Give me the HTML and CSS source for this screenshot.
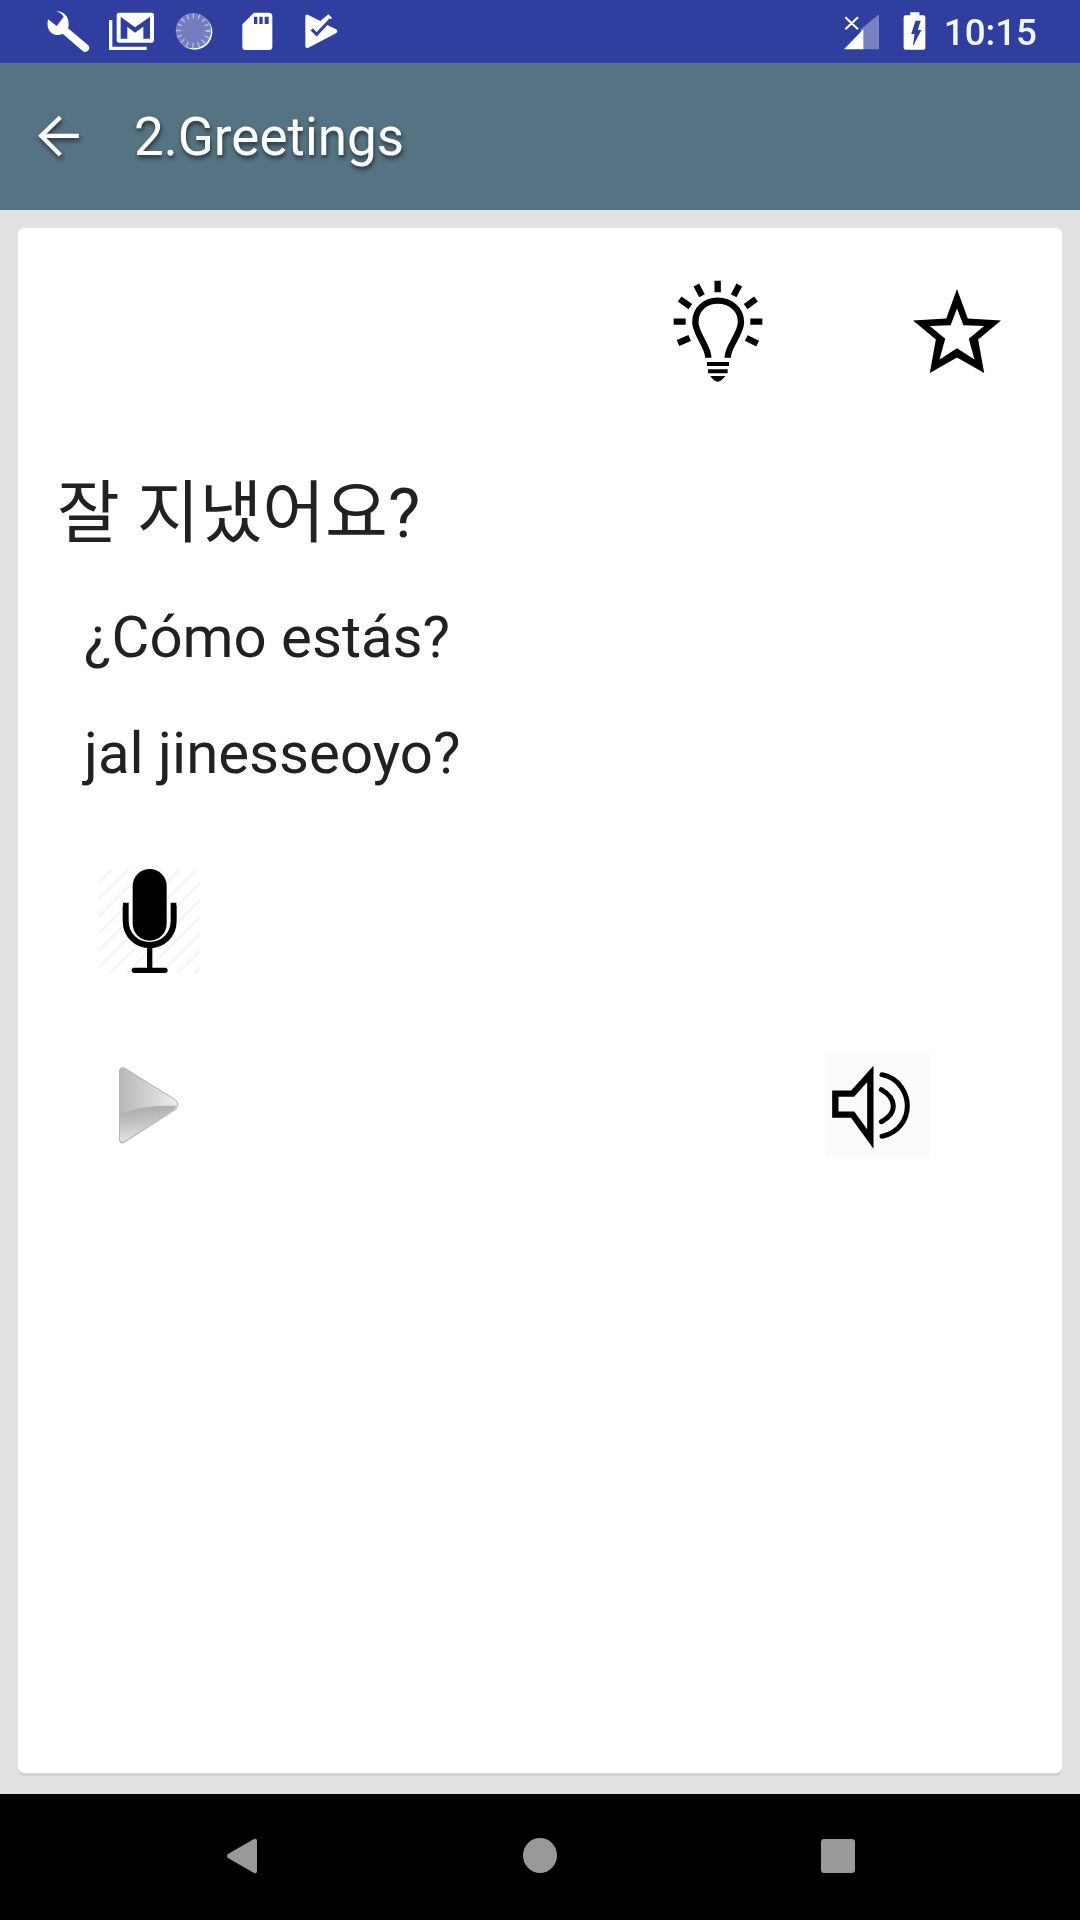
FILE: index.html
```html
<!DOCTYPE html>
<html lang="es">
<head>
<meta charset="utf-8">
<title>2.Greetings</title>
<link rel="stylesheet" href="styles.css">
</head>
<body>
<div class="screen">
  <header class="status">
    <div class="status-left">
      <svg class="slot" viewBox="111 0 189 189"><path class="w" d="M168 33C190 33 206 48 206 72C206 78 205 82 204 85L263 134Q272 142 265 151Q257 160 247 152L188 101C182 104 176 105 170 105C150 103 138 85 144 58L170 78L191 50C185 40 176 36 168 33Z"/></svg>
      <svg class="slot" viewBox="300 0 189 189"><path class="w" d="M327 60H337V140H440V150H327Z"/><rect class="w" x="350" y="38" width="112" height="90" rx="7"/><path class="b" d="M362 50L405 82L450 50V116H430V80L405 98L382 80V116H362Z"/></svg>
      <svg class="slot" viewBox="489 0 189 189"><circle class="w" cx="584" cy="96" r="53"/><circle class="b" cx="580" cy="92" r="53"/><circle class="w" cx="580" cy="92" r="53" opacity=".33"/><circle class="tick" cx="580" cy="92" r="44"/></svg>
      <svg class="slot" viewBox="678 0 189 189"><path class="w" d="M762 38H806Q817 38 817 49V140Q817 150 806 150H738Q727 150 727 140V73Z"/><path class="b" d="M762 50h10v22h-10zM778 50h10v22h-10zM794 50h12v22h-12z"/></svg>
      <svg class="slot" viewBox="867 0 189 189"><path class="w" d="M916 50Q916 41 925 45L961 63L985 43L996 53L980 74L1008 88Q1016 94 1008 100L925 143Q916 147 916 138Z"/><path class="bl" d="M935 88L950 103L992 58"/></svg>
    </div>
    <div class="status-right">
      <svg class="signal" viewBox="0 0 120 189"><path class="w" opacity=".35" d="M62 148V88L114 45Q117 44 117 48V148Z"/><path class="w" d="M12 148L70 88V148Z"/><path class="xmark" d="M16 52L54 88M54 52L16 88"/></svg>
      <svg class="battery" viewBox="0 0 76 189"><path class="w" d="M28 36H56V45H68Q74 45 74 51V144Q74 150 68 150H14Q8 150 8 144V51Q8 45 14 45H28Z"/><path class="b" d="M44 62H60L51 90H62L36 140L41 102H31Z"/></svg>
      <span class="time">10:15</span>
    </div>
  </header>

  <div class="toolbar">
    <svg class="back" viewBox="110 345 132 130"><path d="M236 408H126M180 352L122 408L180 466"/></svg>
    <h1 class="title">2.Greetings</h1>
  </div>

  <main class="content">
    <section class="card">
      <div class="actions">
        <svg class="bulb" viewBox="95 60 276 312">
          <path class="ink" d="M232 65V100M168 78L185 110M297 78L280 110M118 120L150 143M347 120L316 143M100 188H136M330 188H366M113 252L148 237M352 254L318 237"/>
          <path class="ink" d="M204 296C204 262 165 225 165 190C165 150 195 125 232 125C270 125 302 150 302 190C302 225 262 262 262 296"/>
          <path class="ink thin" d="M200 315H266M203 337H262"/>
          <path d="M210 351H255Q242 368 232 368Q221 368 210 351Z"/>
        </svg>
        <svg class="star" viewBox="820 88 262 250"><path fill-rule="evenodd" d="M951 88L983 176L1082 182L1014 238L1032 338L951 292L870 338L888 238L820 182L919 176ZM951 146L932 196L870 198L916 236L899 298L951 264L1003 298L986 236L1032 198L970 196Z"/></svg>
      </div>

      <p class="korean">잘 지냈어요?</p>
      <p class="line first">¿Cómo estás?</p>
      <p class="line">jal jinesseoyo?</p>

      <svg class="mic" viewBox="55 60 312 315">
        <defs><pattern id="hatch" width="36" height="36" patternUnits="userSpaceOnUse" patternTransform="rotate(-45)"><rect width="36" height="36" fill="#fff"/><rect y="0" width="36" height="7" fill="#f4f4f4"/></pattern></defs>
        <rect x="58" y="62" width="304" height="310" fill="url(#hatch)"/>
        <rect x="159" y="60" width="102" height="215" rx="51"/>
        <path class="holder" d="M130 170H138V215C138 260 172 288 210 288C248 288 282 260 282 215V170H290"/>
        <path class="stem" d="M210 295V362M164 364H256"/>
      </svg>

      <div class="playback">
        <svg class="play" viewBox="110 648 192 242">
          <defs>
            <linearGradient id="gloss" x1="0" y1="0" x2="1" y2="0"><stop offset="0" stop-color="#b6b8b8"/><stop offset=".6" stop-color="#d6d7d7"/><stop offset="1" stop-color="#eeeeee"/></linearGradient>
            <linearGradient id="low" x1="0" y1="0" x2=".2" y2="1"><stop offset="0" stop-color="#a6a7a7"/><stop offset=".55" stop-color="#c4c5c5"/><stop offset="1" stop-color="#e6e6e6"/></linearGradient>
          </defs>
          <path class="tri" fill="url(#gloss)" d="M118 668Q118 652 132 657L285 752Q299 766 285 780L132 878Q118 886 118 868Z"/>
          <path fill="url(#low)" d="M119 798C160 775 220 768 288 770L282 780L132 876Q120 882 119 868Z"/>
        </svg>
        <svg class="speaker" viewBox="48 40 312 312">
          <path class="cone" d="M76 162H128L181 103V298L128 225H76Z"/>
          <path class="wave" d="M214 150Q250 170 250 200Q250 228 214 246M216 105C270 115 292 165 292 198C292 240 265 280 216 290"/>
        </svg>
      </div>
    </section>
  </main>

  <nav class="nav">
    <div class="nav-slot"><svg class="nav-icon" viewBox="0 0 30 36"><path d="M27 1Q30 0 30 3V33Q30 36 27 35L1 20Q-1 18 1 16Z"/></svg></div>
    <div class="nav-slot"><span class="nav-dot"></span></div>
    <div class="nav-slot"><span class="nav-square"></span></div>
  </nav>
</div>
</body>
</html>
```
FILE: styles.css
```css
* { box-sizing: border-box; }
html, body { margin: 0; padding: 0; }
body { font-family: Roboto, "Noto Sans CJK KR", sans-serif; background: #e2e2e2; }
.screen { width: 1080px; height: 1920px; display: flex; flex-direction: column; overflow: hidden; }

.status { height: 63px; flex: none; background: #303f9f; display: flex; align-items: center; justify-content: space-between; padding: 0 43px 0 37px; }
.status-left, .status-right { display: flex; align-items: center; height: 63px; }
.slot { width: 63px; height: 63px; display: block; }
.w { fill: #fff; }
.b { fill: #303f9f; }
.bl { fill: none; stroke: #303f9f; stroke-width: 9; }
.tick { fill: none; stroke: #fff; stroke-opacity: .5; stroke-width: 15; stroke-dasharray: 4 13; }
.xmark { fill: none; stroke: #fff; stroke-width: 6; }
.signal { width: 40px; height: 63px; display: block; margin-right: 21px; }
.battery { width: 25px; height: 63px; display: block; margin-right: 18px; }
.time { color: #fff; font-size: 36.75px; font-weight: 500; line-height: 60px; padding-top: 3px; opacity: .95; }

.toolbar { height: 147px; flex: none; background: #557382; display: flex; align-items: center; padding-left: 37px; }
.back { width: 44px; height: 43px; display: block; margin-right: 53px; filter: drop-shadow(1px 3px 2px rgba(0,0,0,.55)); }
.back path { fill: none; stroke: #fff; stroke-width: 13; }
.title { margin: 0; color: #fff; font-size: 53px; font-weight: 400; line-height: 64px; text-shadow: 1px 3px 4px rgba(0,0,0,.55); }

.content { flex: 1; padding: 18px 18px 21px; display: flex; min-height: 0; }
.card { flex: 1; background: #fff; border-radius: 6px; box-shadow: 0 3px 0 #d2d2d2; padding: 54px 61px 0 0; }

.actions { display: flex; justify-content: flex-end; align-items: flex-start; gap: 149px; height: 101px; }
.bulb { width: 92px; height: 104px; display: block; margin-top: -3px; }
.star { width: 88px; height: 84px; display: block; margin-top: 7px; }
.ink { fill: none; stroke: #000; stroke-width: 19; }
.thin { stroke-width: 12; }

.korean { margin: 0; padding: 84px 0 0 39px; color: #212121; font-size: 68.25px; line-height: 94px; }
.line { margin: 0; padding: 54px 0 0 66px; color: #212121; font-size: 58.15px; line-height: 62px; }
.first { padding-top: 45px; }

.mic { display: block; width: 104px; height: 105px; margin: 85px 0 0 80px; }
.holder { fill: none; stroke: #000; stroke-width: 18; }
.stem { fill: none; stroke: #000; stroke-width: 16; stroke-linecap: round; }

.playback { display: flex; justify-content: space-between; align-items: center; margin-top: 79px; padding: 0 71px 0 99px; }
.play { width: 64px; height: 81px; display: block; }
.tri { stroke: #b4b4b4; stroke-width: 3; filter: drop-shadow(0 1px 2px rgba(0,0,0,.3)); }
.speaker { width: 104px; height: 104px; display: block; background: #fbfbfb; }
.cone { fill: none; stroke: #000; stroke-width: 19; }
.wave { fill: none; stroke: #000; stroke-width: 15; stroke-linecap: round; }

.nav { height: 126px; flex: none; background: #000; display: flex; justify-content: center; align-items: center; padding-bottom: 3px; }
.nav-slot { width: 298px; display: flex; justify-content: center; align-items: center; }
.nav-icon { width: 30px; height: 36px; display: block; fill: #999; }
.nav-dot { width: 34px; height: 35px; border-radius: 50%; background: #999; display: block; }
.nav-square { width: 34px; height: 34px; border-radius: 3px; background: #999; display: block; }
```
